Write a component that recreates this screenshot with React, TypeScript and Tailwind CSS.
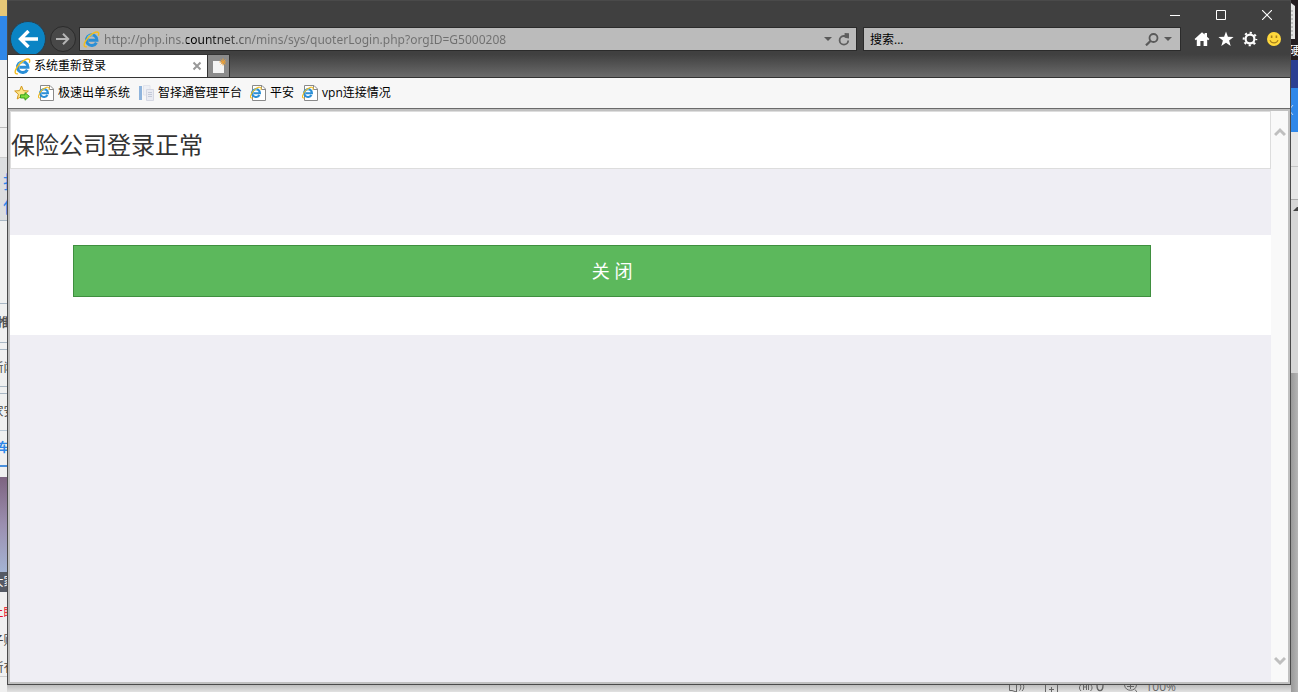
import React, { useState } from "react";

const bookmarks = [
  { id: 1, text: "极速出单系统", icon: "ie" },
  { id: 2, text: "智择通管理平台", icon: "doc" },
  { id: 3, text: "平安", icon: "ie" },
  { id: 4, text: "vpn连接情况", icon: "ie" },
];

// slices of the page that shows to the left of the window
const leftSlices = [
  { id: 1, text: "", style: "h-[16px] bg-[#e6c777]" },
  { id: 2, text: "", style: "h-[44px] bg-[#2f87e9]" },
  { id: 3, text: "", style: "h-[68px] border-b border-[#bbbbbb]" },
  { id: 4, text: "", style: "h-[30px] border-b border-[#cccccc]" },
  {
    id: 5,
    text: "找保",
    style:
      "h-[63px] items-start justify-start whitespace-pre-line border-b border-[#a9b7c4] bg-[#dcdee0] pt-3 pl-[3px] text-lg leading-6 text-[#2f87e9]",
  },
  { id: 6, text: "", style: "h-[83px] border-b border-[#a9b7c4]" },
  { id: 7, text: "推", style: "h-[39px] border-b border-[#a9b7c4] font-bold text-[#555555]" },
  { id: 8, text: "", style: "h-[7px] border-b border-[#a9b7c4]" },
  { id: 9, text: "新闻", style: "h-[37px] border-b border-[#a9b7c4]" },
  { id: 10, text: "", style: "h-[7px] border-b border-[#a9b7c4]" },
  { id: 11, text: "家安", style: "h-[37px] border-b border-[#b9c7d4]" },
  { id: 12, text: "车", style: "h-[36px] border-b-2 border-[#4a90dd] font-bold text-[#2f87e9]" },
  { id: 13, text: "", style: "h-[10px]" },
  { id: 14, text: "", style: "h-[95px] bg-linear-to-b from-[#7d6480] via-[#9b8fb0] to-[#a4b4d4]" },
  { id: 15, text: "大家", style: "h-[20px] bg-[#555a64] text-white" },
  { id: 16, text: "上眼", style: "h-[42px] text-[#e8112d]" },
  { id: 17, text: "子购", style: "h-[14px]" },
  { id: 18, text: "所有", style: "h-[29px] border-b border-[#cccccc] pt-3" },
];

function IeMark() {
  return (
    <g fill="none">
      <path d="M12.6 11A5 5 0 1 1 13.2 8.8H5" stroke="#2b8fd6" strokeWidth="2.8" />
      <path d="M4.2 6.4A4.8 4.8 0 0 1 9.5 3.8" stroke="#6cc4f0" strokeWidth="1.2" />
      <path
        d="M3.6 14.8C1.4 15.4.5 14 1.500 11.400C3 7.400 7.400 2.600 11.600 1.200C14.400.4 15.400 1.600 14.400 4.400"
        stroke="#f4bd1c"
        strokeWidth="1.3"
      />
    </g>
  );
}

function IeIcon() {
  return (
    <svg viewBox="0 0 16 16" className="size-[17px] shrink-0">
      <IeMark />
    </svg>
  );
}

function IePageIcon() {
  return (
    <svg viewBox="0 0 16 16" className="size-4 shrink-0">
      <path d="M2.5.5H12L15.5 4V15.5H2.5Z" fill="#fff" stroke="#8a8a8a" />
      <path d="M11.5.5V4.5H15.5" fill="none" stroke="#8a8a8a" />
      <g transform="translate(-.4 1.4) scale(.78)">
        <IeMark />
      </g>
    </svg>
  );
}

function DocIcon() {
  return (
    <svg viewBox="0 0 16 16" className="size-4 shrink-0">
      <path d="M1 1H4V15H1Z" fill="#8fb4dc" />
      <path d="M5.5.5H12V10H5.5Z" fill="#eef0f5" stroke="#e2e4ec" />
      <path d="M8.5 4.5H15.5V15.5H8.5Z" fill="#e9ebf2" stroke="#d4d7e2" />
      <path d="M10 7.5H14M10 9.5H14M10 11.5H14" stroke="#c4cad8" />
    </svg>
  );
}

function AddFavoriteIcon() {
  return (
    <svg viewBox="0 0 16 16" className="size-4 shrink-0">
      <path
        d="M7.5 1L9.4 5.6L14.4 6L10.6 9.2L11.8 14L7.5 11.4L3.2 14L4.4 9.2L.7 6L5.6 5.6Z"
        fill="#fde58a"
        stroke="#d39a1e"
        strokeLinejoin="round"
      />
      <path d="M6.5 9.8H11V7.6L15.4 11.4L11 15.2V13H6.5Z" fill="#7ddb3c" stroke="#2e9a1a" strokeWidth=".9" />
    </svg>
  );
}

function TitleBar() {
  return (
    <div className="flex h-[26px] justify-end bg-[#404040] pt-[2px] text-white">
      <button aria-label="最小化" className="flex w-[46px] items-center justify-center">
        <svg viewBox="0 0 10 10" className="size-[10px]">
          <path d="M0 5.5H10" stroke="currentColor" />
        </svg>
      </button>
      <button aria-label="最大化" className="flex w-[46px] items-center justify-center">
        <svg viewBox="0 0 10 10" className="size-[10px]">
          <path d="M.5.5H9.5V9.5H.5Z" fill="none" stroke="currentColor" />
        </svg>
      </button>
      <button aria-label="关闭窗口" className="flex w-[46px] items-center justify-center">
        <svg viewBox="0 0 10 10" className="size-[10px]">
          <path d="M0 0L10 10M10 0L0 10" stroke="currentColor" strokeWidth="1.1" />
        </svg>
      </button>
    </div>
  );
}

function NavBar() {
  const [url, setUrl] = useState("http://php.ins.countnet.cn/mins/sys/quoterLogin.php?orgID=G5000208");
  const [search, setSearch] = useState("");
  return (
    <div className="flex h-6 items-center pl-[2px]">
      <button
        aria-label="后退"
        className="flex size-9 shrink-0 items-center justify-center rounded-full border border-[#2b3f4c] bg-[#0a84c4]"
      >
        <svg viewBox="0 0 20 18" className="h-[18px] w-5">
          <path d="M20 9H3M10.5 1L2.5 9L10.5 17" fill="none" stroke="#fff" strokeWidth="3.4" />
        </svg>
      </button>
      <button
        aria-label="前进"
        className="ml-1 flex size-[26px] shrink-0 items-center justify-center rounded-full border border-[#2b2b2b] bg-[#484848]"
      >
        <svg viewBox="0 0 14 12" className="h-3 w-[14px]">
          <path d="M0 6H12M7 .8L12.2 6L7 11.2" fill="none" stroke="#b4b4b4" strokeWidth="2" />
        </svg>
      </button>
      <div className="ml-[3px] flex h-6 flex-1 items-center border border-[#2b2b2b] bg-[#bbbbbb] pl-[3px]">
        <IeIcon />
        <input
          type="text"
          aria-label="地址"
          value={url}
          onChange={(e) => setUrl(e.target.value)}
          className="ml-1 h-5 min-w-0 flex-1 bg-transparent bg-linear-to-r from-[#6f6f6f] from-[82px] via-black via-[82px] to-[#6f6f6f] to-[148px] bg-clip-text font-['Noto_Sans','Noto_Sans_CJK_SC',sans-serif] text-xs text-transparent outline-none"
        />
        <button aria-label="显示地址列表" className="flex h-5 w-4 items-center justify-center">
          <svg viewBox="0 0 8 4" className="h-1 w-2">
            <path d="M0 0H8L4 4Z" fill="#5a5a5a" />
          </svg>
        </button>
        <button aria-label="刷新" className="mr-1 flex h-5 w-4 items-center justify-center">
          <svg viewBox="0 0 12 13" className="h-[13px] w-3">
            <path d="M7.5 3H5.6A4.3 4.3 0 1 0 10.2 7.4" fill="none" stroke="#5e5e5e" strokeWidth="1.8" />
            <path d="M6.6 0L11 .2V5.4L6.6 4.8Z" fill="#5e5e5e" />
          </svg>
        </button>
      </div>
      <div className="ml-[6px] flex h-6 w-[318px] items-center border border-[#2b2b2b] bg-[#bbbbbb] pl-[6px]">
        <input
          type="text"
          aria-label="搜索"
          placeholder="搜索..."
          value={search}
          onChange={(e) => setSearch(e.target.value)}
          className="h-5 min-w-0 flex-1 text-xs text-black outline-none placeholder:text-black"
        />
        <button aria-label="开始搜索" className="flex h-5 w-4 items-center justify-center">
          <svg viewBox="0 0 14 13" className="h-[13px] w-[14px]">
            <circle cx="8.5" cy="5" r="4" fill="none" stroke="#5a5a5a" strokeWidth="1.8" />
            <path d="M5.5 8L1 12.4" stroke="#5a5a5a" strokeWidth="2.2" />
          </svg>
        </button>
        <button aria-label="搜索选项" className="mr-1 flex h-5 w-4 items-center justify-center">
          <svg viewBox="0 0 8 4" className="h-1 w-2">
            <path d="M0 0H8L4 4Z" fill="#5a5a5a" />
          </svg>
        </button>
      </div>
      <div className="mr-2 ml-[13px] flex gap-2">
        <button aria-label="主页">
          <svg viewBox="0 0 16 16" className="size-4">
            <path d="M8 1.2L10.6 3.6V2H13V5.8L15.4 8L14.3 9.3L13.2 8.4V15H9.6V10H6.4V15H2.8V8.4L1.7 9.3L.6 8Z" fill="#fff" />
          </svg>
        </button>
        <button aria-label="收藏夹">
          <svg viewBox="0 0 16 16" className="size-4">
            <path d="M8 .5L9.9 5.8L15.6 6L11.1 9.4L12.7 15L8 11.7L3.3 15L4.9 9.4L.4 6L6.1 5.8Z" fill="#fff" />
          </svg>
        </button>
        <button aria-label="工具">
          <svg viewBox="0 0 16 16" className="size-4">
            <circle cx="8" cy="8" r="4.4" fill="none" stroke="#fff" strokeWidth="2.2" />
            <circle cx="8" cy="8" r="6.3" fill="none" stroke="#fff" strokeWidth="2" strokeDasharray="2.2 2.748" strokeDashoffset="1.1" />
          </svg>
        </button>
        <button aria-label="反馈">
          <svg viewBox="0 0 16 16" className="size-4">
            <circle cx="8" cy="8" r="7" fill="#ffd83c" />
            <path d="M5.6 4.4V7M10.4 4.4V7" stroke="#a8801c" strokeWidth="1.6" />
            <path d="M4 9.2C5 12.8 11 12.8 12 9.2" fill="none" stroke="#a8801c" strokeWidth="1.2" />
          </svg>
        </button>
      </div>
    </div>
  );
}

function TabBar() {
  return (
    <div className="flex h-[26px] items-end text-xs">
      <div className="flex h-[23px] w-[200px] items-center border-t border-r border-[#333333] bg-white pr-[5px] pl-[6px] text-black">
        <IeIcon />
        <span className="ml-[3px] flex-1">系统重新登录</span>
        <button aria-label="关闭选项卡">
          <svg viewBox="0 0 10 10" className="size-[10px]">
            <path d="M1.5 1.5L8.5 8.5M8.5 1.5L1.5 8.5" stroke="#999" strokeWidth="2" />
          </svg>
        </button>
      </div>
      <button
        aria-label="新建选项卡"
        className="flex h-[23px] w-[22px] items-center justify-center border-t border-r border-[#333333] bg-[#8b8b8b]"
      >
        <svg viewBox="0 0 14 16" className="h-4 w-[14px]">
          <path d="M1 3H8L12 7V15H1Z" fill="#f4f4f4" />
          <path d="M11 .5V7.5M7.5 4H14M8.8 1.6L13.4 6.4M13.4 1.6L8.8 6.4" stroke="#f0a030" />
        </svg>
      </button>
    </div>
  );
}

function FavoritesBar() {
  return (
    <nav className="flex h-[31px] items-center gap-2 border-b border-[#6b6b6b] bg-[#f7f7f7] pl-[6px] text-xs text-black">
      <button aria-label="添加到收藏夹栏">
        <AddFavoriteIcon />
      </button>
      {bookmarks.map((item) => (
        <a key={item.id} href="#" className="flex items-center gap-1">
          {item.icon === "ie" ? <IePageIcon /> : <DocIcon />}
          {item.text}
        </a>
      ))}
    </nav>
  );
}

function Page() {
  return (
    <div className="flex flex-1 border-2 border-[#c0c0c0] bg-[#efeef4]">
      <main className="flex-1">
        <header className="flex h-[58px] items-center border border-[#dddddd] bg-white pt-[10px]">
          <h1 className="text-2xl text-[#333333]">保险公司登录正常</h1>
        </header>
        <div className="mt-[66px] h-[100px] bg-white pt-[10px]">
          <button className="ml-[5%] h-[52px] w-[85.5%] border border-[#3f8f3f] bg-[#5cb85c] text-lg text-white">
            关 闭
          </button>
        </div>
      </main>
      <div className="flex w-[17px] flex-col items-center justify-between bg-[#f9f9f9] py-4">
        <button aria-label="向上滚动">
          <svg viewBox="0 0 12 10" className="h-[10px] w-3">
            <path d="M1 8L6 3L11 8" fill="none" stroke="#bfbfbf" strokeWidth="3" />
          </svg>
        </button>
        <button aria-label="向下滚动">
          <svg viewBox="0 0 12 10" className="h-[10px] w-3">
            <path d="M1 2L6 7L11 2" fill="none" stroke="#bfbfbf" strokeWidth="3" />
          </svg>
        </button>
      </div>
    </div>
  );
}

function StatusStrip() {
  return (
    <div className="flex h-[7px] items-end overflow-hidden bg-linear-to-b from-[#bdbdbd] to-[#e2e2e2] text-[#666666]">
      <div className="flex flex-1 items-end justify-end gap-5">
        <svg viewBox="0 0 17 7" className="h-[7px] w-[17px]">
          <path d="M1.5 0V5.5H4L8.5 7V0M11.5 5.5C13 4 13 2 12.5 0M14 6C16 4 16 2 15.5 0" fill="none" stroke="currentColor" />
        </svg>
        <svg viewBox="0 0 13 7" className="h-[7px] w-[13px]">
          <path d="M.5 7V0M12.5 7V0M6.5 2V7M4 4.5H9" fill="none" stroke="currentColor" />
        </svg>
        <svg viewBox="0 0 26 7" className="h-[7px] w-[26px]">
          <path d="M2.5 0C1 2 1 4 3 6M13 0C14.5 2 14.5 4 12.5 6M5.5 5V0M8.5 5V0M5.5 2H8.5M10.5 0V5" fill="none" stroke="currentColor" />
          <path d="M19 0C19 7.5 25 7.5 25 0" fill="none" stroke="currentColor" strokeWidth="1.4" />
        </svg>
        <svg viewBox="0 0 13 7" className="h-[7px] w-[13px]">
          <path d="M.5 0C1 7 12 7 12.5 0M3 1.5H10M6.5 0V4M11 4.5L13 7" fill="none" stroke="currentColor" />
        </svg>
      </div>
      <span className="mr-[115px] ml-2 text-xs leading-[10px]">100%</span>
    </div>
  );
}

function LeftEdge() {
  return (
    <div className="w-[7px] shrink-0 overflow-hidden bg-[#f0f0f0] text-xs text-[#444444]">
      {leftSlices.map((slice) => (
        <div key={slice.id} className={`flex items-center justify-center overflow-hidden whitespace-nowrap ${slice.style}`}>
          {slice.text}
        </div>
      ))}
    </div>
  );
}

function RightEdge() {
  return (
    <div className="flex w-[7px] shrink-0 flex-col overflow-hidden bg-[#e6e6e6] text-xs whitespace-nowrap">
      <div className="h-[60px] bg-[#241d20] text-white">
        <svg viewBox="0 0 7 42" className="h-[42px] w-[7px]">
          <path d="M0 3L4 6V39H0Z" fill="#e4e4e4" />
          <path d="M1 10V36" stroke="#999" strokeDasharray="2 2" />
        </svg>
        <div className="flex h-[18px] justify-center leading-[18px]">硬</div>
      </div>
      <div className="h-[28px] bg-[#2b3f92]" />
      <div className="flex h-[44px] items-center bg-[#2f87e9]">
        <svg viewBox="0 0 7 10" className="h-[10px] w-[7px]">
          <path d="M2 0L-2 5L2 10" fill="none" stroke="#b8d6f8" />
        </svg>
      </div>
      <div className="h-[35px] border-b border-[#c4c4c4]" />
      <div className="h-[33px] border-b border-[#aaaaaa]" />
      <div className="h-[173px] bg-[#d6d6d6] pt-[7px]">
        <svg viewBox="0 0 7 4" className="h-1 w-[7px]">
          <path d="M2 4L6 0H7V4Z" fill="#444" />
        </svg>
      </div>
      <div className="flex-1 bg-linear-to-r from-[#999999] to-[#b4b4b4]" />
    </div>
  );
}

export default function App() {
  return (
    <div className="flex min-h-screen font-['Open_Sans','Noto_Sans_CJK_SC',sans-serif]">
      <LeftEdge />
      <div className="flex min-w-0 flex-1 flex-col">
        <div className="flex flex-1 flex-col border border-[#4a4a4a] bg-[#404040]">
          <div className="flex flex-col border-b border-[#333333] bg-linear-to-b from-[#404040] from-70% to-[#6b6b6b]">
            <TitleBar />
            <NavBar />
            <TabBar />
          </div>
          <FavoritesBar />
          <Page />
        </div>
        <StatusStrip />
      </div>
      <RightEdge />
    </div>
  );
}
